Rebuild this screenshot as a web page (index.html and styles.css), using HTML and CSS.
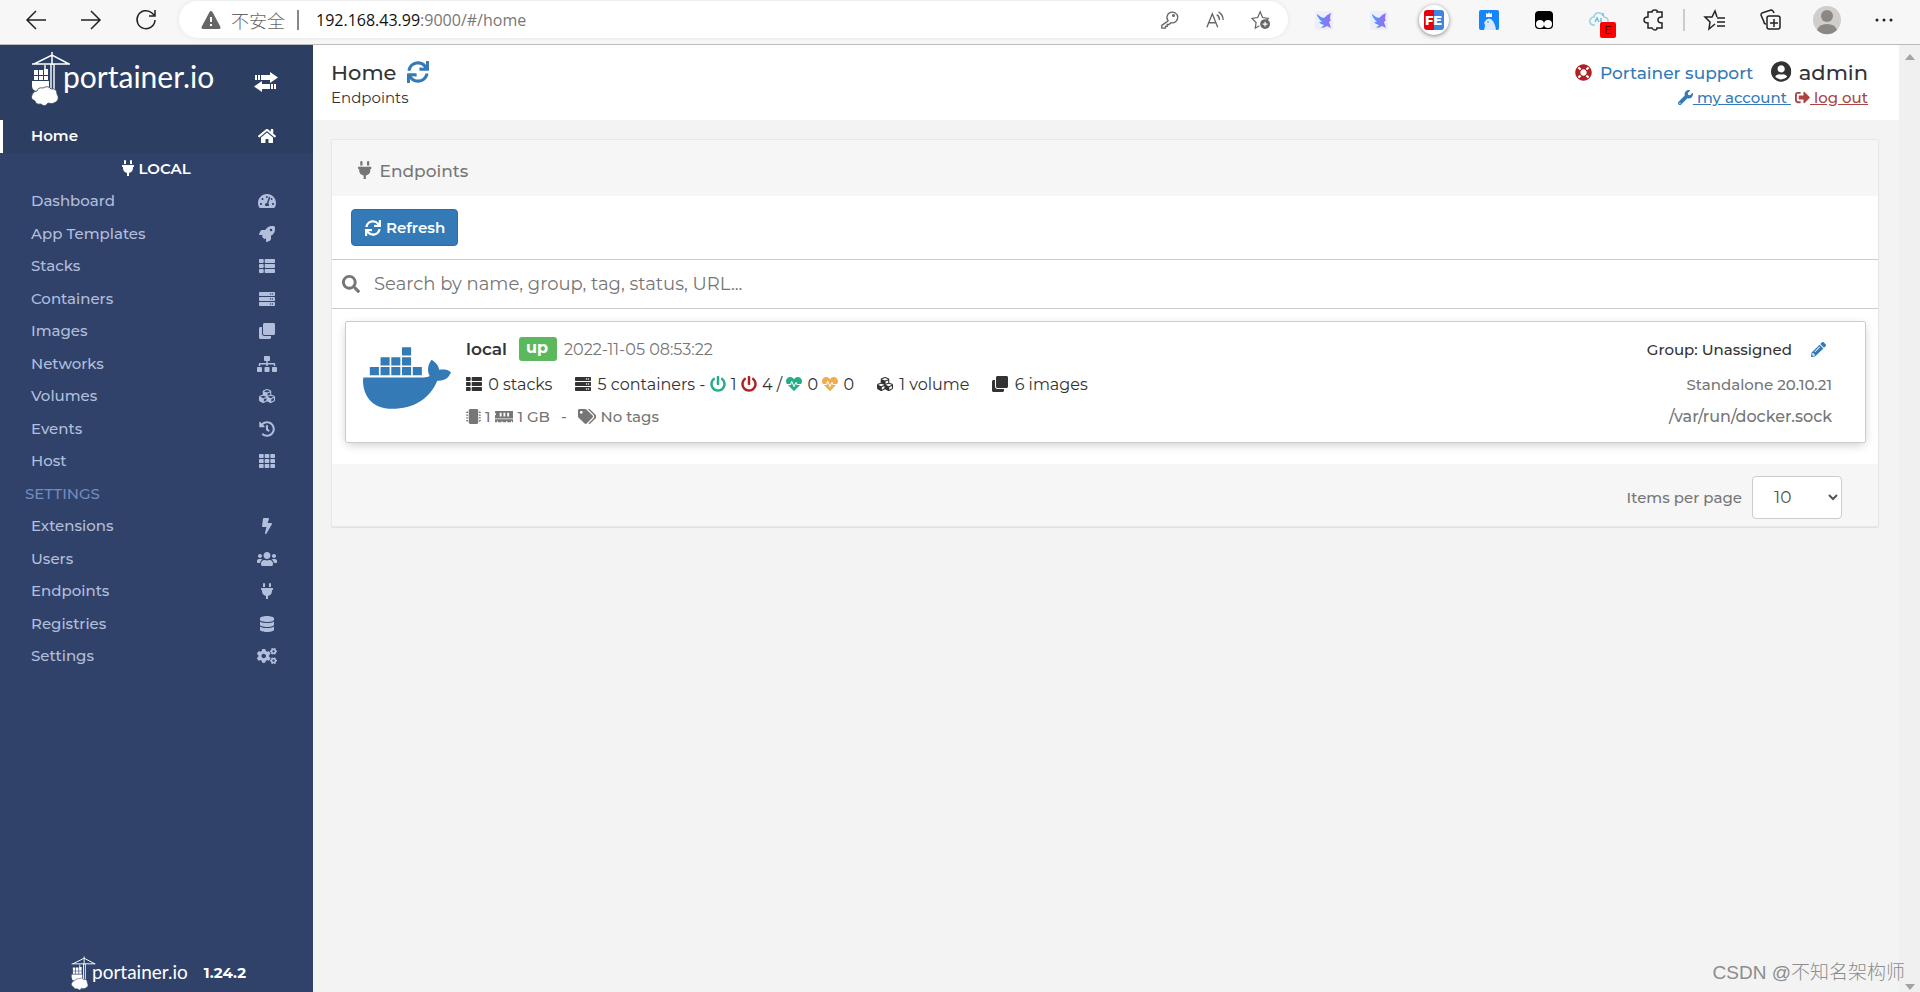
FILE: index.html
```html
<!doctype html>
<html lang="en">
<head>
    <meta charset="utf-8" />
    <title>Portainer</title>
    <link rel="stylesheet" href="styles.css">
</head>
<body>
<svg class="sprite" aria-hidden="true">
    <symbol id="home" viewBox="0 0 576 512"><path d="M280.37 148.26L96 300.11V464a16 16 0 0 0 16 16l112.06-.29a16 16 0 0 0 15.92-16V368a16 16 0 0 1 16-16h64a16 16 0 0 1 16 16v95.64a16 16 0 0 0 16 16.05L464 480a16 16 0 0 0 16-16V300L295.67 148.26a12.19 12.19 0 0 0-15.3 0zM571.6 251.47L488 182.56V44.05a12 12 0 0 0-12-12h-56a12 12 0 0 0-12 12v72.61L318.47 43a48 48 0 0 0-61 0L4.34 251.47a12 12 0 0 0-1.6 16.9l25.5 31A12 12 0 0 0 45.15 301l235.22-193.74a12.19 12.19 0 0 1 15.3 0L530.9 301a12 12 0 0 0 16.9-1.6l25.5-31a12 12 0 0 0-1.7-16.93z"/></symbol>
    <symbol id="plug" viewBox="0 0 384 512"><path d="M320,32a32,32,0,0,0-64,0v96h64Zm48,128H16A16,16,0,0,0,0,176v32a16,16,0,0,0,16,16H32v32A160.07,160.07,0,0,0,160,412.8V512h64V412.8A160.07,160.07,0,0,0,352,256V224h16a16,16,0,0,0,16-16V176A16,16,0,0,0,368,160ZM128,32a32,32,0,0,0-64,0v96h64Z"/></symbol>
    <symbol id="tachometer" viewBox="0 0 576 512"><path d="M288 32C128.94 32 0 160.94 0 320c0 52.8 14.25 102.26 39.06 144.8 5.61 9.62 16.3 15.2 27.44 15.2h443c11.14 0 21.83-5.58 27.44-15.2C561.75 422.26 576 372.8 576 320c0-159.06-128.94-288-288-288zm0 64c14.71 0 26.58 10.13 30.32 23.65-1.11 2.26-2.64 4.23-3.45 6.67l-9.22 27.67c-5.13 3.49-10.97 6.01-17.64 6.01-17.67 0-32-14.33-32-32S270.33 96 288 96zM96 384c-17.67 0-32-14.33-32-32s14.33-32 32-32 32 14.33 32 32-14.33 32-32 32zm48-160c-17.67 0-32-14.33-32-32s14.33-32 32-32 32 14.33 32 32-14.33 32-32 32zm246.77-72.41l-61.33 184C343.13 347.33 352 364.54 352 384c0 11.72-3.38 22.55-8.88 32H232.88c-5.5-9.45-8.88-20.28-8.88-32 0-33.94 26.5-61.43 59.9-63.59l61.34-184.01c4.17-12.56 17.73-19.45 30.36-15.17 12.57 4.19 19.35 17.79 15.17 30.36zm14.66 57.2l15.52-46.55c3.47-1.29 7.13-2.23 11.05-2.23 17.67 0 32 14.33 32 32s-14.33 32-32 32c-11.38-.01-20.89-6.28-26.57-15.22zM480 384c-17.67 0-32-14.33-32-32s14.33-32 32-32 32 14.33 32 32-14.33 32-32 32z"/></symbol>
    <symbol id="rocket" viewBox="0 0 512 512"><path d="M505.12 19.09c-1.19-5.53-6.66-11-12.2-12.18C460.7 0 435.5 0 410.4 0 307.2 0 245.3 55.2 199.05 128H94.84c-16.35 0-35.56 11.87-42.89 26.48L2.52 253.3A28.4 28.4 0 0 0 0 264a24 24 0 0 0 24 24h103.8l-22.46 22.47c-11.37 11.36-13 32.26 0 45.25l50.9 50.9c11.16 11.2 32.16 13.16 45.28 0L224 384.16V488a24 24 0 0 0 24 24 28.56 28.56 0 0 0 10.7-2.52l98.74-49.39c14.63-7.29 26.5-26.5 26.5-42.86V312.8c72.6-46.3 128.04-108.4 128.04-211.1.1-25.2.1-50.4-6.86-82.61zM384.04 168a40 40 0 1 1 40-40 40 40 0 0 1-40 40z"/></symbol>
    <symbol id="th-list" viewBox="0 0 512 512"><path d="M149.333 216v80c0 13.255-10.745 24-24 24H24c-13.255 0-24-10.745-24-24v-80c0-13.255 10.745-24 24-24h101.333c13.255 0 24 10.745 24 24zM0 376v80c0 13.255 10.745 24 24 24h101.333c13.255 0 24-10.745 24-24v-80c0-13.255-10.745-24-24-24H24c-13.255 0-24 10.745-24 24zM125.333 32H24C10.745 32 0 42.745 0 56v80c0 13.255 10.745 24 24 24h101.333c13.255 0 24-10.745 24-24V56c0-13.255-10.745-24-24-24zm80 448H488c13.255 0 24-10.745 24-24v-80c0-13.255-10.745-24-24-24H205.333c-13.255 0-24 10.745-24 24v80c0 13.255 10.745 24 24 24zm-24-424v80c0 13.255 10.745 24 24 24H488c13.255 0 24-10.745 24-24V56c0-13.255-10.745-24-24-24H205.333c-13.255 0-24 10.745-24 24zm24 264H488c13.255 0 24-10.745 24-24v-80c0-13.255-10.745-24-24-24H205.333c-13.255 0-24 10.745-24 24v80c0 13.255 10.745 24 24 24z"/></symbol>
    <symbol id="server" viewBox="0 0 512 512"><path d="M480 160H32c-17.673 0-32-14.327-32-32V64c0-17.673 14.327-32 32-32h448c17.673 0 32 14.327 32 32v64c0 17.673-14.327 32-32 32zm-48-88c-13.255 0-24 10.745-24 24s10.745 24 24 24 24-10.745 24-24-10.745-24-24-24zm-64 0c-13.255 0-24 10.745-24 24s10.745 24 24 24 24-10.745 24-24-10.745-24-24-24zm112 248H32c-17.673 0-32-14.327-32-32v-64c0-17.673 14.327-32 32-32h448c17.673 0 32 14.327 32 32v64c0 17.673-14.327 32-32 32zm-48-88c-13.255 0-24 10.745-24 24s10.745 24 24 24 24-10.745 24-24-10.745-24-24-24zm-64 0c-13.255 0-24 10.745-24 24s10.745 24 24 24 24-10.745 24-24-10.745-24-24-24zm112 248H32c-17.673 0-32-14.327-32-32v-64c0-17.673 14.327-32 32-32h448c17.673 0 32 14.327 32 32v64c0 17.673-14.327 32-32 32zm-48-88c-13.255 0-24 10.745-24 24s10.745 24 24 24 24-10.745 24-24-10.745-24-24-24zm-64 0c-13.255 0-24 10.745-24 24s10.745 24 24 24 24-10.745 24-24-10.745-24-24-24z"/></symbol>
    <symbol id="clone" viewBox="0 0 512 512"><path d="M464 0c26.51 0 48 21.49 48 48v288c0 26.51-21.49 48-48 48H176c-26.51 0-48-21.49-48-48V48c0-26.51 21.49-48 48-48h288M176 416c-44.112 0-80-35.888-80-80V128H48c-26.51 0-48 21.49-48 48v288c0 26.51 21.49 48 48 48h288c26.51 0 48-21.49 48-48v-48H176z"/></symbol>
    <symbol id="sitemap" viewBox="0 0 640 512"><path d="M128 352H32c-17.67 0-32 14.33-32 32v96c0 17.67 14.33 32 32 32h96c17.67 0 32-14.33 32-32v-96c0-17.67-14.33-32-32-32zm-24-80h192v48h48v-48h192v48h48v-57.59c0-21.17-17.23-38.41-38.41-38.41H344v-64h40c17.67 0 32-14.33 32-32V32c0-17.67-14.33-32-32-32H256c-17.67 0-32 14.33-32 32v96c0 17.67 14.33 32 32 32h40v64H94.41C73.23 224 56 241.23 56 262.41V320h48v-48zm264 80h-96c-17.67 0-32 14.33-32 32v96c0 17.67 14.33 32 32 32h96c17.67 0 32-14.33 32-32v-96c0-17.67-14.33-32-32-32zm240 0h-96c-17.67 0-32 14.33-32 32v96c0 17.67 14.33 32 32 32h96c17.67 0 32-14.33 32-32v-96c0-17.67-14.33-32-32-32z"/></symbol>
    <symbol id="cubes" viewBox="0 0 512 512"><path d="M488.6 250.2L392 214V105.5c0-15-9.3-28.4-23.4-33.7l-100-37.5c-8.1-3.1-17.1-3.1-25.3 0l-100 37.5c-14.1 5.3-23.4 18.7-23.4 33.7V214l-96.6 36.2C9.3 255.5 0 268.9 0 283.9V394c0 13.6 7.7 26.1 19.9 32.2l100 50c10.1 5.1 22.1 5.1 32.2 0l103.9-52 103.9 52c10.1 5.1 22.1 5.1 32.2 0l100-50c12.2-6.1 19.9-18.6 19.9-32.2V283.9c0-15-9.3-28.4-23.4-33.7zM358 214.8l-85 31.9v-68.2l85-37v73.3zM154 104.1l102-38.2 102 38.2v.6l-102 41.4-102-41.4v-.6zm84 291.1l-85 42.5v-79.1l85-38.8v75.4zm0-112l-102 41.4-102-41.4v-.6l102-38.2 102 38.2v.6zm240 112l-85 42.5v-79.1l85-38.8v75.4zm0-112l-102 41.4-102-41.4v-.6l102-38.2 102 38.2v.6z"/></symbol>
    <symbol id="history" viewBox="0 0 512 512"><path d="M504 255.531c.253 136.64-111.18 248.372-247.82 248.468-59.015.042-113.223-20.53-155.822-54.911-11.077-8.94-11.905-25.541-1.839-35.607l11.267-11.267c8.609-8.609 22.353-9.551 31.891-1.984C173.062 425.135 212.781 440 256 440c101.705 0 184-82.311 184-184 0-101.705-82.311-184-184-184-48.814 0-93.149 18.969-126.068 49.932l50.754 50.754c10.08 10.08 2.941 27.314-11.313 27.314H24c-8.837 0-16-7.163-16-16V38.627c0-14.254 17.234-21.393 27.314-11.314l49.372 49.372C129.209 34.136 189.552 8 256 8c136.81 0 247.747 110.78 248 247.531zm-180.912 78.784l9.823-12.63c8.138-10.463 6.253-25.542-4.21-33.679L288 256.349V152c0-13.255-10.745-24-24-24h-16c-13.255 0-24 10.745-24 24v135.651l65.409 50.874c10.463 8.137 25.541 6.253 33.679-4.21z"/></symbol>
    <symbol id="th" viewBox="0 0 512 512"><rect x="0" y="32" width="149" height="128" rx="24"/><rect x="181" y="32" width="149" height="128" rx="24"/><rect x="363" y="32" width="149" height="128" rx="24"/><rect x="0" y="192" width="149" height="128" rx="24"/><rect x="181" y="192" width="149" height="128" rx="24"/><rect x="363" y="192" width="149" height="128" rx="24"/><rect x="0" y="352" width="149" height="128" rx="24"/><rect x="181" y="352" width="149" height="128" rx="24"/><rect x="363" y="352" width="149" height="128" rx="24"/></symbol>
    <symbol id="bolt" viewBox="0 0 320 512"><path d="M296 160H180.6l42.6-129.8C227.2 15 215.7 0 200 0H56C44 0 33.8 8.9 32.2 20.8l-32 240C-1.7 275.2 9.5 288 24 288h118.7L96.6 482.5c-3.6 15.2 8 29.5 23.3 29.5 8.4 0 16.4-4.4 20.8-12l176-304c9.3-15.9-2.2-36-20.7-36z"/></symbol>
    <symbol id="users" viewBox="0 0 640 512"><path d="M96 224c35.3 0 64-28.7 64-64s-28.7-64-64-64-64 28.7-64 64 28.7 64 64 64zm448 0c35.3 0 64-28.7 64-64s-28.7-64-64-64-64 28.7-64 64 28.7 64 64 64zm32 32h-64c-17.6 0-33.5 7.1-45.1 18.6 40.3 22.1 68.9 62 75.1 109.4h66c17.7 0 32-14.3 32-32v-32c0-35.3-28.7-64-64-64zm-256 0c61.9 0 112-50.1 112-112S381.9 32 320 32 208 82.1 208 144s50.1 112 112 112zm76.8 32h-8.3c-20.8 10-43.9 16-68.5 16s-47.6-6-68.5-16h-8.3C179.6 288 128 339.6 128 403.2V432c0 26.5 21.5 48 48 48h288c26.5 0 48-21.5 48-48v-28.8c0-63.6-51.6-115.2-115.2-115.2zm-223.7-13.4C161.5 263.1 145.6 256 128 256H64c-35.3 0-64 28.7-64 64v32c0 17.7 14.3 32 32 32h65.9c6.3-47.4 34.9-87.3 75.2-109.4z"/></symbol>
    <symbol id="database" viewBox="0 0 448 512"><path d="M448 73.143v45.714C448 159.143 347.667 192 224 192S0 159.143 0 118.857V73.143C0 32.857 100.333 0 224 0s224 32.857 224 73.143zM448 176v102.857C448 319.143 347.667 352 224 352S0 319.143 0 278.857V176c48.125 33.143 136.208 48.572 224 48.572S399.874 209.143 448 176zm0 160v102.857C448 479.143 347.667 512 224 512S0 479.143 0 438.857V336c48.125 33.143 136.208 48.572 224 48.572S399.874 369.143 448 336z"/></symbol>
    <symbol id="cogs" viewBox="0 0 640 512"><path id="small-cog" d="M512.1 191l-8.200 14.300c-3 5.300-9.400 7.500-15.100 5.400-11.800-4.400-22.600-10.700-32.100-18.600-4.600-3.800-5.800-10.500-2.800-15.700l8.200-14.300c-6.900-8-12.300-17.300-15.900-27.400h-16.500c-6 0-11.200-4.300-12.200-10.300-2-12-2.100-24.600 0-37.100 1-6 6.200-10.400 12.200-10.400h16.500c3.600-10.100 9-19.400 15.900-27.400l-8.200-14.300c-3-5.200-1.900-11.900 2.800-15.700 9.500-7.900 20.400-14.200 32.100-18.600 5.700-2.100 12.100.1 15.100 5.400l8.200 14.300c10.500-1.900 21.200-1.900 31.700 0L552 6.300c3-5.300 9.400-7.500 15.100-5.400 11.800 4.400 22.600 10.700 32.100 18.600 4.600 3.800 5.800 10.500 2.800 15.700l-8.200 14.300c6.900 8 12.300 17.300 15.900 27.400h16.500c6 0 11.200 4.300 12.200 10.300 2 12 2.100 24.600 0 37.100-1 6-6.200 10.400-12.200 10.400h-16.500c-3.600 10.100-9 19.400-15.900 27.400l8.200 14.300c3 5.200 1.900 11.900-2.800 15.700-9.500 7.900-20.400 14.200-32.100 18.600-5.700 2.100-12.100-.1-15.100-5.400l-8.200-14.300c-10.400 1.900-21.200 1.900-31.700 0zm-10.500-58.800c38.500 29.600 82.400-14.300 52.800-52.800-38.500-29.700-82.400 14.300-52.800 52.800z"/><use href="#small-cog" y="300"/><path d="M386.300 286.100l33.700 16.800c10.100 5.800 14.500 18.100 10.500 29.100-8.900 24.200-26.400 46.400-42.600 65.800-7.400 8.900-20.200 11.100-30.300 5.300l-29.100-16.800c-16 13.700-34.600 24.600-54.900 31.700v33.600c0 11.600-8.300 21.600-19.700 23.600-24.600 4.200-50.400 4.400-75.900 0-11.500-2-20-11.900-20-23.600V418c-20.300-7.200-38.900-18-54.900-31.700L74 403c-10 5.800-22.900 3.600-30.300-5.300-16.200-19.400-33.300-41.600-42.200-65.700-4-10.900.4-23.200 10.500-29.100l33.300-16.800c-3.900-20.900-3.900-42.400 0-63.400L12 205.800c-10.100-5.800-14.600-18.100-10.500-29 8.900-24.200 26-46.400 42.200-65.800 7.400-8.900 20.200-11.100 30.300-5.300l29.100 16.800c16-13.700 34.600-24.600 54.900-31.700V57.100c0-11.500 8.200-21.500 19.600-23.500 24.600-4.200 50.500-4.400 76-.1 11.500 2 20 11.900 20 23.600v33.600c20.300 7.200 38.900 18 54.900 31.700l29.100-16.800c10-5.800 22.900-3.600 30.300 5.300 16.200 19.400 33.200 41.600 42.100 65.800 4 10.900.1 23.200-10 29.100l-33.700 16.800c3.900 21 3.900 42.500 0 63.500zm-117.600 21.100c59.200-77-28.700-164.900-105.700-105.700-59.200 77 28.700 164.900 105.700 105.700z"/></symbol>
    <symbol id="sync" viewBox="0 0 512 512"><path d="M440.65 12.57l4 82.77A247.16 247.16 0 0 0 255.83 8C134.73 8 33.91 94.92 12.29 209.82A12 12 0 0 0 24.09 224h49.05a12 12 0 0 0 11.67-9.26 175.91 175.91 0 0 1 317-56.94l-101.46-4.86a12 12 0 0 0-12.57 12v47.41a12 12 0 0 0 12 12H500a12 12 0 0 0 12-12V12a12 12 0 0 0-12-12h-47.37a12 12 0 0 0-11.98 12.57zM255.83 432a175.61 175.61 0 0 1-146-77.8l101.8 4.87a12 12 0 0 0 12.57-12v-47.4a12 12 0 0 0-12-12H12a12 12 0 0 0-12 12V500a12 12 0 0 0 12 12h47.35a12 12 0 0 0 12-12.6l-4.15-82.57A247.17 247.17 0 0 0 255.83 504c121.11 0 221.93-86.92 243.55-201.82a12 12 0 0 0-11.8-14.18h-49.05a12 12 0 0 0-11.67 9.26A175.86 175.86 0 0 1 255.83 432z"/></symbol>
    <symbol id="search" viewBox="0 0 512 512"><path d="M505 442.7L405.3 343c-4.500-4.500-10.600-7-17-7H372c27.600-35.300 44-79.700 44-128C416 93.100 322.900 0 208 0S0 93.100 0 208s93.100 208 208 208c48.300 0 92.700-16.400 128-44v16.300c0 6.400 2.500 12.500 7 17l99.700 99.700c9.400 9.400 24.600 9.400 33.900 0l28.300-28.300c9.400-9.400 9.400-24.600.1-34zM208 336c-70.700 0-128-57.200-128-128 0-70.700 57.200-128 128-128 70.700 0 128 57.200 128 128 0 70.700-57.200 128-128 128z"/></symbol>
    <symbol id="power-off" viewBox="0 0 512 512"><path d="M400 54.1c63 45 104 118.6 104 201.9 0 136.8-110.8 247.7-247.5 248C120 504.3 8.2 393 8 256.4 7.9 173.1 48.9 99.3 111.8 54.2c11.7-8.3 28-4.8 35 7.7L162.6 90c5.9 10.5 3.1 23.8-6.6 31-41.5 30.8-68 79.6-68 134.9-.1 92.3 74.5 168.1 168 168.1 91.6 0 168.6-74.2 168-169.1-.3-51.8-24.7-101.8-68.1-134-9.7-7.2-12.4-20.5-6.5-30.9l15.8-28.1c7-12.4 23.2-16.1 34.8-7.8zM296 264V24c0-13.3-10.7-24-24-24h-32c-13.3 0-24 10.7-24 24v240c0 13.3 10.7 24 24 24h32c13.3 0 24-10.7 24-24z"/></symbol>
    <symbol id="heartbeat" viewBox="0 0 512 512"><path d="M320.2 243.8l-49.7 99.4c-6 12.1-23.4 11.7-28.9-.6l-56.9-126.3-30 71.7H60.6l182.5 186.5c7.1 7.3 18.6 7.3 25.7 0L451.4 288H342.3l-22.1-44.2zM473.7 73.9l-2.4-2.5c-51.5-52.6-135.8-52.6-187.4 0L256 100l-27.9-28.5c-51.5-52.7-135.9-52.7-187.4 0l-2.4 2.4C-10.4 123.7-12.5 203 31 256h102.4l35.9-86.2c5.4-12.9 23.6-13.1 29.4-.4l58.2 129.3 49-97.9c5.9-11.8 22.7-11.8 28.6 0l27.6 55.2H481c43.5-53 41.4-132.3-7.3-182.1z"/></symbol>
    <symbol id="microchip" viewBox="0 0 512 512"><rect x="96" width="320" height="512" rx="48"/><path d="M0 100h24V88h48v48H24v-12H0zm0 96h24v-12h48v48H24v-12H0zm0 96h24v-12h48v48H24v-12H0zm0 96h24v-12h48v48H24v-12H0zM512 100h-24V88h-48v48h48v-12h24zm0 96h-24v-12h-48v48h48v-12h24zm0 96h-24v-12h-48v48h48v-12h24zm0 96h-24v-12h-48v48h48v-12h24z"/></symbol>
    <symbol id="memory" viewBox="0 0 640 512"><path d="M640 130.94V96c0-17.67-14.33-32-32-32H32c-17.67 0-32 14.33-32 32v34.94c18.6 6.61 32 24.19 32 45.06s-13.4 38.45-32 45.06V320h640v-98.94c-18.6-6.61-32-24.19-32-45.06s13.4-38.45 32-45.06zM224 256h-64V128h64v128zm128 0h-64V128h64v128zm128 0h-64V128h64v128zM0 448h64v-26.67c0-8.84 7.16-16 16-16s16 7.16 16 16V448h128v-26.67c0-8.84 7.16-16 16-16s16 7.16 16 16V448h128v-26.67c0-8.84 7.16-16 16-16s16 7.16 16 16V448h128v-26.67c0-8.84 7.16-16 16-16s16 7.16 16 16V448h64v-96H0v96z"/></symbol>
    <symbol id="tags" viewBox="0 0 640 512"><path d="M497.941 225.941L286.059 14.059A48 48 0 0 0 252.118 0H48C21.49 0 0 21.49 0 48v204.118a48 48 0 0 0 14.059 33.941l211.882 211.882c18.744 18.745 49.136 18.746 67.882 0l204.118-204.118c18.745-18.745 18.745-49.137 0-67.882zM112 160c-26.51 0-48-21.49-48-48s21.49-48 48-48 48 21.49 48 48-21.49 48-48 48zm513.941 133.823L421.823 497.941c-18.745 18.745-49.137 18.745-67.882 0l-.36-.36L527.64 323.522c16.999-16.999 26.36-39.6 26.36-63.64s-9.362-46.641-26.36-63.64L331.397 0h48.721a48 48 0 0 1 33.941 14.059l211.882 211.882c18.745 18.745 18.745 49.137 0 67.882z"/></symbol>
    <symbol id="pencil" viewBox="0 0 512 512"><path d="M497.9 142.1l-46.1 46.1c-4.7 4.7-12.3 4.7-17 0l-111-111c-4.7-4.7-4.7-12.3 0-17l46.1-46.1c18.7-18.7 49.1-18.7 67.9 0l60.1 60.1c18.8 18.7 18.8 49.1 0 67.9zM284.2 99.8L21.6 362.4.4 483.9c-2.9 16.4 11.4 30.6 27.8 27.8l121.5-21.3 262.6-262.6c4.7-4.7 4.7-12.3 0-17l-111-111c-4.8-4.7-12.4-4.7-17.1 0zM124.1 339.9c-5.5-5.5-5.5-14.3 0-19.8l154-154c5.5-5.5 14.3-5.5 19.8 0s5.5 14.3 0 19.8l-154 154c-5.5 5.5-14.3 5.5-19.8 0zM88 424h48v36.3l-64.5 11.3-31.1-31.1L51.7 376H88v48z"/></symbol>
    <symbol id="wrench" viewBox="0 0 512 512"><path d="M507.73 109.1c-2.24-9.03-13.54-12.09-20.12-5.51l-74.36 74.36-67.88-11.31-11.31-67.88 74.36-74.36c6.62-6.62 3.43-17.9-5.66-20.16-47.38-11.74-99.55.91-136.58 37.93-39.64 39.64-50.55 97.1-34.05 147.2L18.74 402.76c-24.99 24.99-24.99 65.51 0 90.5 24.99 24.99 65.51 24.99 90.5 0l213.21-213.21c50.12 16.71 107.47 5.68 147.37-34.22 37.07-37.07 49.7-89.32 37.91-136.73zM64 472c-13.25 0-24-10.75-24-24 0-13.26 10.75-24 24-24s24 10.74 24 24c0 13.25-10.75 24-24 24z"/></symbol>
    <symbol id="sign-out" viewBox="0 0 512 512"><path d="M497 273L329 441c-15 15-41 4.5-41-17v-96H152c-13.3 0-24-10.7-24-24v-96c0-13.3 10.7-24 24-24h136V88c0-21.4 25.9-32 41-17l168 168c9.3 9.4 9.3 24.6 0 34zM192 436v-40c0-6.6-5.4-12-12-12H96c-17.7 0-32-14.3-32-32V160c0-17.7 14.3-32 32-32h84c6.6 0 12-5.4 12-12V76c0-6.6-5.4-12-12-12H96c-53 0-96 43-96 96v192c0 53 43 96 96 96h84c6.6 0 12-5.4 12-12z"/></symbol>
    <symbol id="user-circle" viewBox="0 0 496 512"><path d="M248 8C111 8 0 119 0 256s111 248 248 248 248-111 248-248S385 8 248 8zm0 96c48.6 0 88 39.4 88 88s-39.4 88-88 88-88-39.4-88-88 39.4-88 88-88zm0 344c-58.7 0-111.3-26.6-146.5-68.2 18.8-35.4 55.6-59.8 98.5-59.8 2.4 0 4.8.4 7.1 1.1 13 4.2 26.6 6.9 40.9 6.9 14.3 0 28-2.7 40.9-6.9 2.3-.7 4.7-1.1 7.1-1.1 42.9 0 79.7 24.4 98.5 59.8C359.3 421.4 306.7 448 248 448z"/></symbol>
    <symbol id="life-ring" viewBox="0 0 512 512"><path d="M256 8C119.033 8 8 119.033 8 256s111.033 248 248 248 248-111.033 248-248S392.967 8 256 8zm173.696 119.559l-63.399 63.399c-10.987-18.559-26.67-34.252-45.255-45.255l63.399-63.399a218.396 218.396 0 0 1 45.255 45.255zM256 352c-53.019 0-96-42.981-96-96s42.981-96 96-96 96 42.981 96 96-42.981 96-96 96zM127.559 82.304l63.399 63.399c-18.559 10.987-34.252 26.67-45.255 45.255l-63.399-63.399a218.372 218.372 0 0 1 45.255-45.255zM82.304 384.441l63.399-63.399c10.987 18.559 26.67 34.252 45.255 45.255l-63.399 63.399a218.396 218.396 0 0 1-45.255-45.255zm302.137 45.255l-63.399-63.399c18.559-10.987 34.252-26.67 45.255-45.255l63.399 63.399a218.403 218.403 0 0 1-45.255 45.255z"/></symbol>
    <symbol id="docker" viewBox="0 0 640 512"><path d="M349.9 236.3h-66.1v-59.4h66.1v59.4zm0-204.3h-66.1v60.7h66.1V32zm78.2 144.8H362v59.4h66.1v-59.4zm-156.3-72.1h-66.1v60.1h66.1v-60.1zm78.1 0h-66.1v60.1h66.1v-60.1zm276.8 100c-14.4-9.7-47.6-13.2-73.1-8.4-3.3-24-16.7-44.9-41.1-63.7l-14-9.3-9.3 14c-18.4 27.8-23.4 73.6-3.7 103.8-8.7 4.7-25.8 11.1-48.4 10.7H2.4c-8.7 50.8 5.8 116.8 44 162.1 37.1 43.9 92.7 66.2 165.4 66.2 157.4 0 273.9-72.5 328.4-204.2 21.4.4 67.6.1 91.3-45.2 1.5-2.5 6.6-13.2 8.5-17.1l-13.3-8.9zm-511.1-27.9h-66v59.4h66.1v-59.4zm78.1 0h-66.1v59.4h66.1v-59.4zm78.1 0h-66.1v59.4h66.1v-59.4zm-78.1-72.1h-66.1v60.1h66.1v-60.1z"/></symbol>
    <symbol id="crane" viewBox="0 0 40 55"><path d="M21 0v13M1 12h38M3 12L21 3l17 9" fill="none" stroke="currentColor" stroke-width="1.5"/><path d="M20 12v25M23 12v25M14 13v6" fill="none" stroke="currentColor" stroke-width="1.4"/><path d="M3 18h4v5H3zm5 0h4v5H8zm5-1h4v6h-4zM3 24h4v4H3zm5 0h4v4H8zm5 0h4v4h-4zM1 29h17v6q0 3-3 4H5q-4-1-4-5z"/><path d="M6 39q1-4 6-3 5-3 8 1 6-1 6 5 3 5-1 8-4 3-8 1-3 5-7 1-5 1-6-3-5-2-3-6 1-4 5-4z" stroke="#2d3e63" stroke-width=".8"/></symbol>
    <symbol id="bird" viewBox="0 0 20 20"><rect x="1" y="1" width="18" height="19" rx="2" fill="#eceefa"/><path d="M3 4q3 3 7 4 2-3 7-5-1 3-1 6l1 1-2 2 2 6-4-2q-3 2-6 2l3-3q-4-1-5-3l3 0Q3 7 3 4z" fill="url(#bird-fill)"/></symbol>
    <linearGradient id="bird-fill"><stop offset="0" stop-color="#4b9cf5"/><stop offset="1" stop-color="#9a6bf5"/></linearGradient>
</svg>

<div class="toolbar">
    <button class="tool" aria-label="Back"><svg viewBox="0 0 20 20"><path d="M20 10H1M10 1L1 10l9 9"/></svg></button>
    <button class="tool" aria-label="Forward"><svg viewBox="0 0 20 20"><path d="M0 10h19M10 1l9 9-9 9"/></svg></button>
    <button class="tool" aria-label="Reload"><svg viewBox="0 0 20 20"><path d="M19 10a9 9 0 1 1-3-7l2 2M19 0v6h-6"/></svg></button>
    <div class="address">
        <svg class="warning" viewBox="0 0 20 18"><path d="M10 0q1 0 1.500 1l8 15q.5 2-1.500 2H2q-2 0-1.500-2l8-15Q9 0 10 0z" fill="#666"/><path d="M10 6v5M10 13v2" stroke="#fff" stroke-width="2"/></svg>
        <span class="insecure">不安全</span>
        <span class="url">192.168.43.99<span>:9000/#/home</span></span>
        <button class="tool small" aria-label="Passwords"><svg viewBox="0 0 20 20"><path d="M9 11a6 6 0 1 1 3 2l-2 2H8v2H6v2H2v-3z"/><circle cx="15" cy="5" r="1"/></svg></button>
        <button class="tool small" aria-label="Read aloud"><svg viewBox="0 0 20 20"><path d="M1 18L7 3l6 15M3 13h8M12 4q3 2 3 6M14 1q5 3 5 9"/></svg></button>
        <button class="tool small" aria-label="Add to favorites"><svg viewBox="0 0 22 22"><path d="M9 18l-5 3 1-7-5-5 7-1 3-7 3 7 7 1-2 2"/><circle cx="16" cy="16" r="6" fill="#666" stroke="none"/><path d="M16 13v6M13 16h6" stroke="#fff"/></svg></button>
    </div>
    <div class="extensions">
        <button class="tool" aria-label="Bird"><svg class="plain" viewBox="0 0 20 20"><use href="#bird"/></svg></button>
        <button class="tool" aria-label="Bird"><svg class="plain" viewBox="0 0 20 20"><use href="#bird"/></svg></button>
        <button class="tool" aria-label="FE helper"><span class="fe"><span>FE</span></span></button>
        <button class="tool" aria-label="Pigeon"><svg class="plain" viewBox="0 0 20 20"><rect width="20" height="20" rx="2" fill="#1684fc"/><path d="M7 3l2 1 1-2 1 2 2-1v4H7z" fill="#fff"/><path d="M5 20l1-4q0-2-1-3l2-3q3-3 6 0 3 3 4 10z" fill="#d8eaff"/><circle cx="9" cy="12" r=".8" fill="#1684fc"/></svg></button>
        <button class="tool" aria-label="Tampermonkey"><svg class="plain" viewBox="0 0 20 20"><rect x="1" y="1" width="18" height="18" rx="4" fill="#000"/><circle cx="6" cy="14" r="4" fill="#fff"/><circle cx="14" cy="14" r="4" fill="#fff"/></svg></button>
        <button class="tool ariang" aria-label="AriaNg"><svg class="plain" viewBox="0 0 20 20"><path d="M6 15H4q-4-1-3-5 1-3 4-3 1-5 6-4 3 1 4 4 5 1 4 5" fill="none" stroke="#9ccfe4"/><path d="M6 12l2-4 2 4M12 8v4M14 3v3" fill="none" stroke="#5cc2ee"/></svg><span class="badge">E</span></button>
        <button class="tool" aria-label="Extensions"><svg viewBox="0 0 20 20"><path d="M4 2h4q0-2 3-2t2 2h5v5q-4 0-4 3t4 3v5h-5q0 2-2 2t-3-2H4v-5q-4 0-4-3t4-3z"/></svg></button>
    </div>
    <div class="actions">
        <button class="tool" aria-label="Favorites"><svg viewBox="0 0 20 20"><path d="M10 14l-6 5 1-7-5-5h7l3-6 2 6M12 8h8M12 12h8M12 16h8"/></svg></button>
        <button class="tool" aria-label="Collections"><svg viewBox="0 0 20 20"><path d="M5 14q-2 0-2-2L0 5q0-2 1-2l9-3q2 0 3 3"/><rect x="6" y="6" width="13" height="13" rx="2"/><path d="M13 9v8M9 13h8"/></svg></button>
        <button class="tool" aria-label="Profile"><svg class="avatar" viewBox="0 0 28 28"><circle cx="14" cy="14" r="14" fill="#d0cecb"/><circle cx="14" cy="10" r="6" fill="#8b8785"/><path d="M4 24q2-6 10-6t10 6a14 14 0 0 1-20 0z" fill="#8b8785"/></svg></button>
        <button class="tool" aria-label="More"><svg class="plain" viewBox="0 0 20 20"><circle cx="4" cy="10" r="1.500"/><circle cx="11" cy="10" r="1.500"/><circle cx="18" cy="10" r="1.500"/></svg></button>
    </div>
</div>

<div class="page">
    <nav class="sidebar">
        <div class="sidebar-header">
            <a class="logo" href="#"><svg viewBox="0 0 40 55"><use href="#crane"/></svg><span>portainer.io</span></a>
            <svg class="toggle" viewBox="0 0 26 20"><path d="M2 3h2v5H2zM5 3h2v5H5zM8 3h9V0l8 5.500-8 5.500V8H8zM23 12h-2v5h2zM20 12h-2v5h2zM17 12H9V9l-8 5.500L9 20v-3h8z"/></svg>
        </div>
        <ul class="menu">
            <li class="active"><a href="#">Home <svg viewBox="0 0 576 512"><use href="#home"/></svg></a></li>
            <li class="endpoint"><svg viewBox="0 0 384 512"><use href="#plug"/></svg> LOCAL</li>
            <li><a href="#">Dashboard <svg viewBox="0 0 576 512"><use href="#tachometer"/></svg></a></li>
            <li><a href="#">App Templates <svg viewBox="0 0 512 512"><use href="#rocket"/></svg></a></li>
            <li><a href="#">Stacks <svg viewBox="0 0 512 512"><use href="#th-list"/></svg></a></li>
            <li><a href="#">Containers <svg viewBox="0 0 512 512"><use href="#server"/></svg></a></li>
            <li><a href="#">Images <svg viewBox="0 0 512 512"><use href="#clone"/></svg></a></li>
            <li><a href="#">Networks <svg viewBox="0 0 640 512"><use href="#sitemap"/></svg></a></li>
            <li><a href="#">Volumes <svg viewBox="0 0 512 512"><use href="#cubes"/></svg></a></li>
            <li><a href="#">Events <svg viewBox="0 0 512 512"><use href="#history"/></svg></a></li>
            <li><a href="#">Host <svg viewBox="0 0 512 512"><use href="#th"/></svg></a></li>
            <li class="title">SETTINGS</li>
            <li><a href="#">Extensions <svg viewBox="0 0 320 512"><use href="#bolt"/></svg></a></li>
            <li><a href="#">Users <svg viewBox="0 0 640 512"><use href="#users"/></svg></a></li>
            <li><a href="#">Endpoints <svg viewBox="0 0 384 512"><use href="#plug"/></svg></a></li>
            <li><a href="#">Registries <svg viewBox="0 0 448 512"><use href="#database"/></svg></a></li>
            <li><a href="#">Settings <svg viewBox="0 0 640 512"><use href="#cogs"/></svg></a></li>
        </ul>
        <div class="sidebar-footer">
            <a class="logo" href="#"><svg viewBox="0 0 40 55"><use href="#crane"/></svg><span>portainer.io</span></a>
            <span class="version">1.24.2</span>
        </div>
    </nav>

    <main class="content">
        <header class="header">
            <div>
                <h1>Home <a href="#" aria-label="Refresh"><svg class="icon" viewBox="0 0 512 512"><use href="#sync"/></svg></a></h1>
                <div class="crumb">Endpoints</div>
            </div>
            <div class="user">
                <div class="user-top">
                    <a class="support" href="#"><svg class="icon" viewBox="0 0 512 512"><use href="#life-ring"/></svg>Portainer support</a>
                    <span class="name"><svg class="icon" viewBox="0 0 496 512"><use href="#user-circle"/></svg>admin</span>
                </div>
                <div class="user-links">
                    <a href="#"><svg class="icon" viewBox="0 0 512 512"><use href="#wrench"/></svg>&nbsp;my account&nbsp;</a>
                    <a class="logout" href="#"><svg class="icon" viewBox="0 0 512 512"><use href="#sign-out"/></svg>&nbsp;log out</a>
                </div>
            </div>
        </header>

        <section class="widget">
            <h2><svg class="icon" viewBox="0 0 384 512"><use href="#plug"/></svg>Endpoints</h2>
            <div class="action-bar">
                <button class="btn"><svg class="icon" viewBox="0 0 512 512"><use href="#sync"/></svg>Refresh</button>
            </div>
            <label class="search-bar">
                <svg class="icon" viewBox="0 0 512 512"><use href="#search"/></svg>
                <input type="text" placeholder="Search by name, group, tag, status, URL..." aria-label="Search endpoints">
            </label>
            <div class="list">
                <article class="item">
                    <svg class="item-logo" viewBox="0 32 640 448"><use href="#docker" width="640" height="512"/></svg>
                    <div class="item-body">
                        <div class="row">
                            <strong>local</strong>
                            <span class="label">up</span>
                            <span class="muted">2022-11-05 08:53:22</span>
                        </div>
                        <div class="row stats">
                            <span><svg class="icon" viewBox="0 0 512 512"><use href="#th-list"/></svg> 0 stacks</span>
                            <span><svg class="icon" viewBox="0 0 512 512"><use href="#server"/></svg> 5 containers - <svg class="icon green" viewBox="0 0 512 512"><use href="#power-off"/></svg> 1 <svg class="icon red" viewBox="0 0 512 512"><use href="#power-off"/></svg> 4 / <svg class="icon green" viewBox="0 0 512 512"><use href="#heartbeat"/></svg> 0 <svg class="icon orange" viewBox="0 0 512 512"><use href="#heartbeat"/></svg> 0</span>
                            <span><svg class="icon" viewBox="0 0 512 512"><use href="#cubes"/></svg> 1 volume</span>
                            <span><svg class="icon" viewBox="0 0 512 512"><use href="#clone"/></svg> 6 images</span>
                        </div>
                        <div class="row specs muted">
                            <span><svg class="icon" viewBox="0 0 512 512"><use href="#microchip"/></svg> 1 <svg class="icon" viewBox="0 0 640 512"><use href="#memory"/></svg> 1 GB</span>
                            <span>-</span>
                            <span><svg class="icon" viewBox="0 0 640 512"><use href="#tags"/></svg> No tags</span>
                        </div>
                    </div>
                    <div class="item-info">
                        <div class="row group">Group: Unassigned <a href="#" aria-label="Edit"><svg class="icon" viewBox="0 0 512 512"><use href="#pencil"/></svg></a></div>
                        <div class="row muted">Standalone 20.10.21</div>
                        <div class="row muted socket">/var/run/docker.sock</div>
                    </div>
                </article>
            </div>
            <footer class="pager">
                <label for="per-page">Items per page</label>
                <select id="per-page">
                    <option>10</option>
                    <option>25</option>
                    <option>50</option>
                    <option>100</option>
                </select>
            </footer>
        </section>
    </main>

    <div class="scrollbar">
        <svg viewBox="0 0 10 6"><path d="M0 6l5-6 5 6z"/></svg>
        <svg viewBox="0 0 10 6"><path d="M0 0l5 6 5-6z"/></svg>
    </div>
</div>
<div class="watermark">CSDN @不知名架构师</div>
</body>
</html>
```
FILE: styles.css
```css
*{
    box-sizing:border-box;
}
html,body{
    height:100%;
    margin:0;
}
body{
    display:flex;
    flex-direction:column;
    overflow:hidden;
    background:#f3f3f3;
    color:#333;
    font-family:Montserrat,Inter,"Noto Sans CJK SC",sans-serif;
    font-size:16px;
}
a{
    color:#337ab7;
    text-decoration:none;
}
button{
    font-family:inherit;
    border:0;
    padding:0;
    background:none;
    cursor:pointer;
}
ul{
    list-style:none;
    margin:0;
    padding:0;
}
.sprite{
    position:absolute;
    width:0;
    height:0;
}
.icon{
    height:1em;
    fill:currentColor;
    vertical-align:-2px;
}

/* browser bar */
.toolbar{
    flex:none;
    display:flex;
    align-items:flex-start;
    height:45px;
    padding:1px 9px 0 8px;
    background:#f7f7f7;
    border-bottom:1px solid #bbb;
}
.tool{
    display:flex;
    align-items:center;
    justify-content:center;
    width:55px;
    height:38px;
}
.tool svg{
    width:20px;
    height:20px;
    fill:none;
    stroke:#222;
    stroke-width:1.5;
    overflow:visible;
}
.tool svg.plain{
    fill:#222;
    stroke:none;
}
.tool svg.avatar{
    width:28px;
    height:28px;
    stroke:none;
}
.tool.small{
    width:46px;
}
.tool.small svg{
    width:18px;
    height:18px;
    stroke:#666;
}
.address{
    flex:1;
    display:flex;
    align-items:center;
    height:37px;
    margin:0 8px 0 6px;
    padding:0 4px 0 22px;
    border-radius:19px;
    background:#fff;
    box-shadow:0 0 4px #e4e4e4;
}
.warning{
    width:20px;
    height:18px;
}
.insecure{
    margin:0 13px 0 10px;
    padding-right:12px;
    border-right:2px solid #888;
    color:#666;
    font-family:"Noto Sans CJK SC",sans-serif;
    font-weight:300;
    font-size:18px;
    line-height:20px;
}
.url{
    flex:1;
    margin-left:4px;
    color:#111;
    font-family:"Open Sans",sans-serif;
    font-size:16px;
}
.url span{
    color:#777;
}
.extensions,.actions{
    display:flex;
}
.extensions{
    margin-right:2px;
}
.actions{
    padding-left:2px;
    border-left:2px solid transparent;
    border-image:linear-gradient(transparent 9px,#ccc 9px,#ccc 29px,transparent 29px) 2;
}
.actions .tool{
    width:56px;
}
.fe{
    display:flex;
    align-items:center;
    justify-content:center;
    width:30px;
    height:30px;
    border-radius:50%;
    background:#fff;
    box-shadow:0 1px 4px #888;
}
.fe span{
    width:20px;
    height:20px;
    border-radius:3px;
    background:linear-gradient(90deg,#e60012 50%,#3f86e0 50%);
    color:#fff;
    font-weight:800;
    font-size:13px;
    line-height:20px;
}
.ariang{
    position:relative;
}
.badge{
    position:absolute;
    left:29px;
    top:21px;
    width:16px;
    height:16px;
    border-radius:2px;
    background:#f00;
    color:#300;
    font-size:12px;
    line-height:16px;
    text-align:center;
}

.page{
    flex:1;
    display:flex;
    min-height:0;
}

/* sidebar */
.sidebar{
    flex:none;
    display:flex;
    flex-direction:column;
    width:313px;
    background:#30426a;
}
.sidebar-header{
    display:flex;
    align-items:flex-start;
    justify-content:space-between;
    height:75px;
    padding:7px 34px 0 31px;
    background:#2d3e63;
}
.logo{
    display:flex;
    color:#fff;
    font-family:Lato,sans-serif;
    font-size:30px;
    line-height:36px;
}
.logo svg{
    width:40px;
    height:55px;
    fill:#fff;
}
.logo span{
    margin:6px 0 0 -8px;
}
.toggle{
    width:26px;
    height:20px;
    margin-top:20px;
    fill:#fff;
}
.menu li{
    height:32px;
    color:#fff;
    font-weight:600;
    font-size:15px;
    line-height:32px;
}
.menu li:nth-child(odd){
    height:33px;
}
.menu svg{
    height:16px;
    fill:currentColor;
}
.menu a{
    display:flex;
    align-items:center;
    justify-content:space-between;
    padding:0 36px 0 31px;
    color:#b2bfdc;
    font-weight:500;
}
/* one width, so that every icon is centred on the same line */
.menu a svg{
    width:20px;
}
.menu .active{
    background:#2d3e63;
    box-shadow:inset 3px 0 #fff;
}
.menu .active a{
    color:#fff;
    font-weight:600;
}
.menu .endpoint{
    text-align:center;
}
.endpoint svg{
    vertical-align:-2px;
}
.menu .title{
    padding-left:25px;
    color:#738bc0;
    font-weight:500;
}
.sidebar-footer{
    display:flex;
    margin-top:auto;
    padding-left:71px;
    height:36px;
}
.sidebar-footer .logo{
    font-size:19px;
    line-height:28px;
}
.sidebar-footer .logo svg{
    width:25px;
    height:35px;
}
.sidebar-footer .logo span{
    margin:2px 0 0 -4px;
}
.version{
    margin:7px 0 0 16px;
    color:#fff;
    font-weight:700;
    font-size:15px;
    line-height:20px;
}

/* header */
.content{
    flex:1;
    min-width:0;
}
.header{
    display:flex;
    justify-content:space-between;
    height:75px;
    padding:14px 31px 0 18px;
    background:#fff;
}
.header h1{
    margin:0;
    font-weight:500;
    font-size:21px;
    line-height:28px;
}
.header h1 .icon{
    margin-left:5px;
    height:22px;
    vertical-align:-3px;
}
.crumb,.user-links{
    font-weight:500;
    font-size:15px;
    line-height:22px;
}
.crumb{
    font-weight:400;
}
.user{
    text-align:right;
}
.user-top{
    display:flex;
    justify-content:flex-end;
    align-items:center;
    gap:18px;
    line-height:28px;
}
.support{
    font-weight:500;
    font-size:17px;
}
.support .icon{
    margin-right:8px;
    color:#b01f24;
}
.name{
    font-weight:500;
    font-size:21px;
}
.name .icon{
    margin-right:7px;
}
.user-links a{
    text-decoration:underline;
}
.user-links .logout{
    color:#a94442;
}

/* endpoint list */
.widget{
    margin:19px 20px 0 18px;
    border:1px solid #e7e7e7;
    border-radius:2px;
    background:#fff;
    box-shadow:0 1px 1px #e0e0e0;
}
.widget h2{
    margin:0;
    padding:19px 26px 13px;
    background:#f6f6f6;
    color:#767676;
    font-weight:500;
    font-size:17px;
    line-height:24px;
}
.widget h2 .icon{
    height:18px;
    margin-right:8px;
}
.action-bar{
    padding:13px 19px;
    border-bottom:1px solid #ccc;
}
.btn{
    display:flex;
    align-items:center;
    gap:5px;
    height:37px;
    padding:0 12px 0 13px;
    border:1px solid #2e6da4;
    border-radius:4px;
    background:#337ab7;
    color:#fff;
    font-weight:600;
    font-size:15px;
}
.btn .icon{
    height:16px;
}
.search-bar{
    display:flex;
    align-items:center;
    height:49px;
    padding:0 10px;
    border-bottom:1px solid #ccc;
    color:#767676;
    font-size:18px;
}
.search-bar input{
    flex:1;
    margin-left:14px;
    padding:0;
    border:0;
    outline:none;
    font-family:inherit;
    font-size:18px;
}
.search-bar input::placeholder{
    color:#767676;
}
.list{
    padding:12px 12px 21px 13px;
}
.item{
    display:flex;
    align-items:flex-start;
    padding:11px 33px 13px 17px;
    border:1px solid #ccc;
    border-radius:2px;
    box-shadow:0 3px 10px -2px #c4c4c4;
}
.item-logo{
    width:88px;
    height:62px;
    margin:14px 15px 0 0;
    fill:#337ab7;
}
.item-body{
    flex:1;
}
.row{
    display:flex;
    align-items:center;
    height:32px;
}
.item .stats,.item-info .row:nth-child(2){
    height:38px;
}
.item .row:last-child{
    height:26px;
}
.item .row strong{
    margin-right:12px;
    font-weight:600;
    font-size:17px;
}
.label{
    width:38px;
    height:24px;
    margin-right:7px;
    padding-left:7px;
    border-radius:3px;
    background:#5cb85c;
    color:#fff;
    font-weight:700;
    line-height:22px;
}
.muted{
    color:#767676;
}
.stats{
    gap:23px;
}
.stats .icon{
    margin-right:1px;
}
.stats .icon:first-child{
    margin-right:2px;
}
.specs{
    gap:11px;
    font-weight:500;
    font-size:15px;
}
.green{
    color:#23ae89;
}
.red{
    color:#ae2323;
}
.orange{
    color:#f0ad4e;
}
.item-info{
    font-weight:500;
    font-size:15px;
}
.item-info .row{
    justify-content:flex-end;
}
.socket{
    font-size:16px;
}
.group a{
    margin:0 6px 0 19px;
}
.pager{
    display:flex;
    align-items:center;
    justify-content:flex-end;
    gap:10px;
    height:62px;
    padding:4px 36px 0 0;
    background:#f6f6f6;
    color:#767676;
    font-weight:500;
    font-size:15px;
}
.pager select{
    width:90px;
    height:43px;
    padding-left:17px;
    border:1px solid #ccc;
    border-radius:4px;
    background:#fff;
    color:#555;
    font-family:inherit;
    font-size:17px;
}

.scrollbar{
    display:flex;
    flex-direction:column;
    align-items:center;
    justify-content:space-between;
    width:21px;
    padding:9px 0 2px;
    background:#f0f0f0;
}
.scrollbar svg{
    width:10px;
    height:6px;
    fill:#a3a3a3;
}
.watermark{
    position:absolute;
    right:15px;
    bottom:5px;
    color:#8c8c8c;
    font-family:"Liberation Sans","Noto Sans CJK SC",sans-serif;
    font-weight:300;
    font-size:19px;
    line-height:28px;
}
```
